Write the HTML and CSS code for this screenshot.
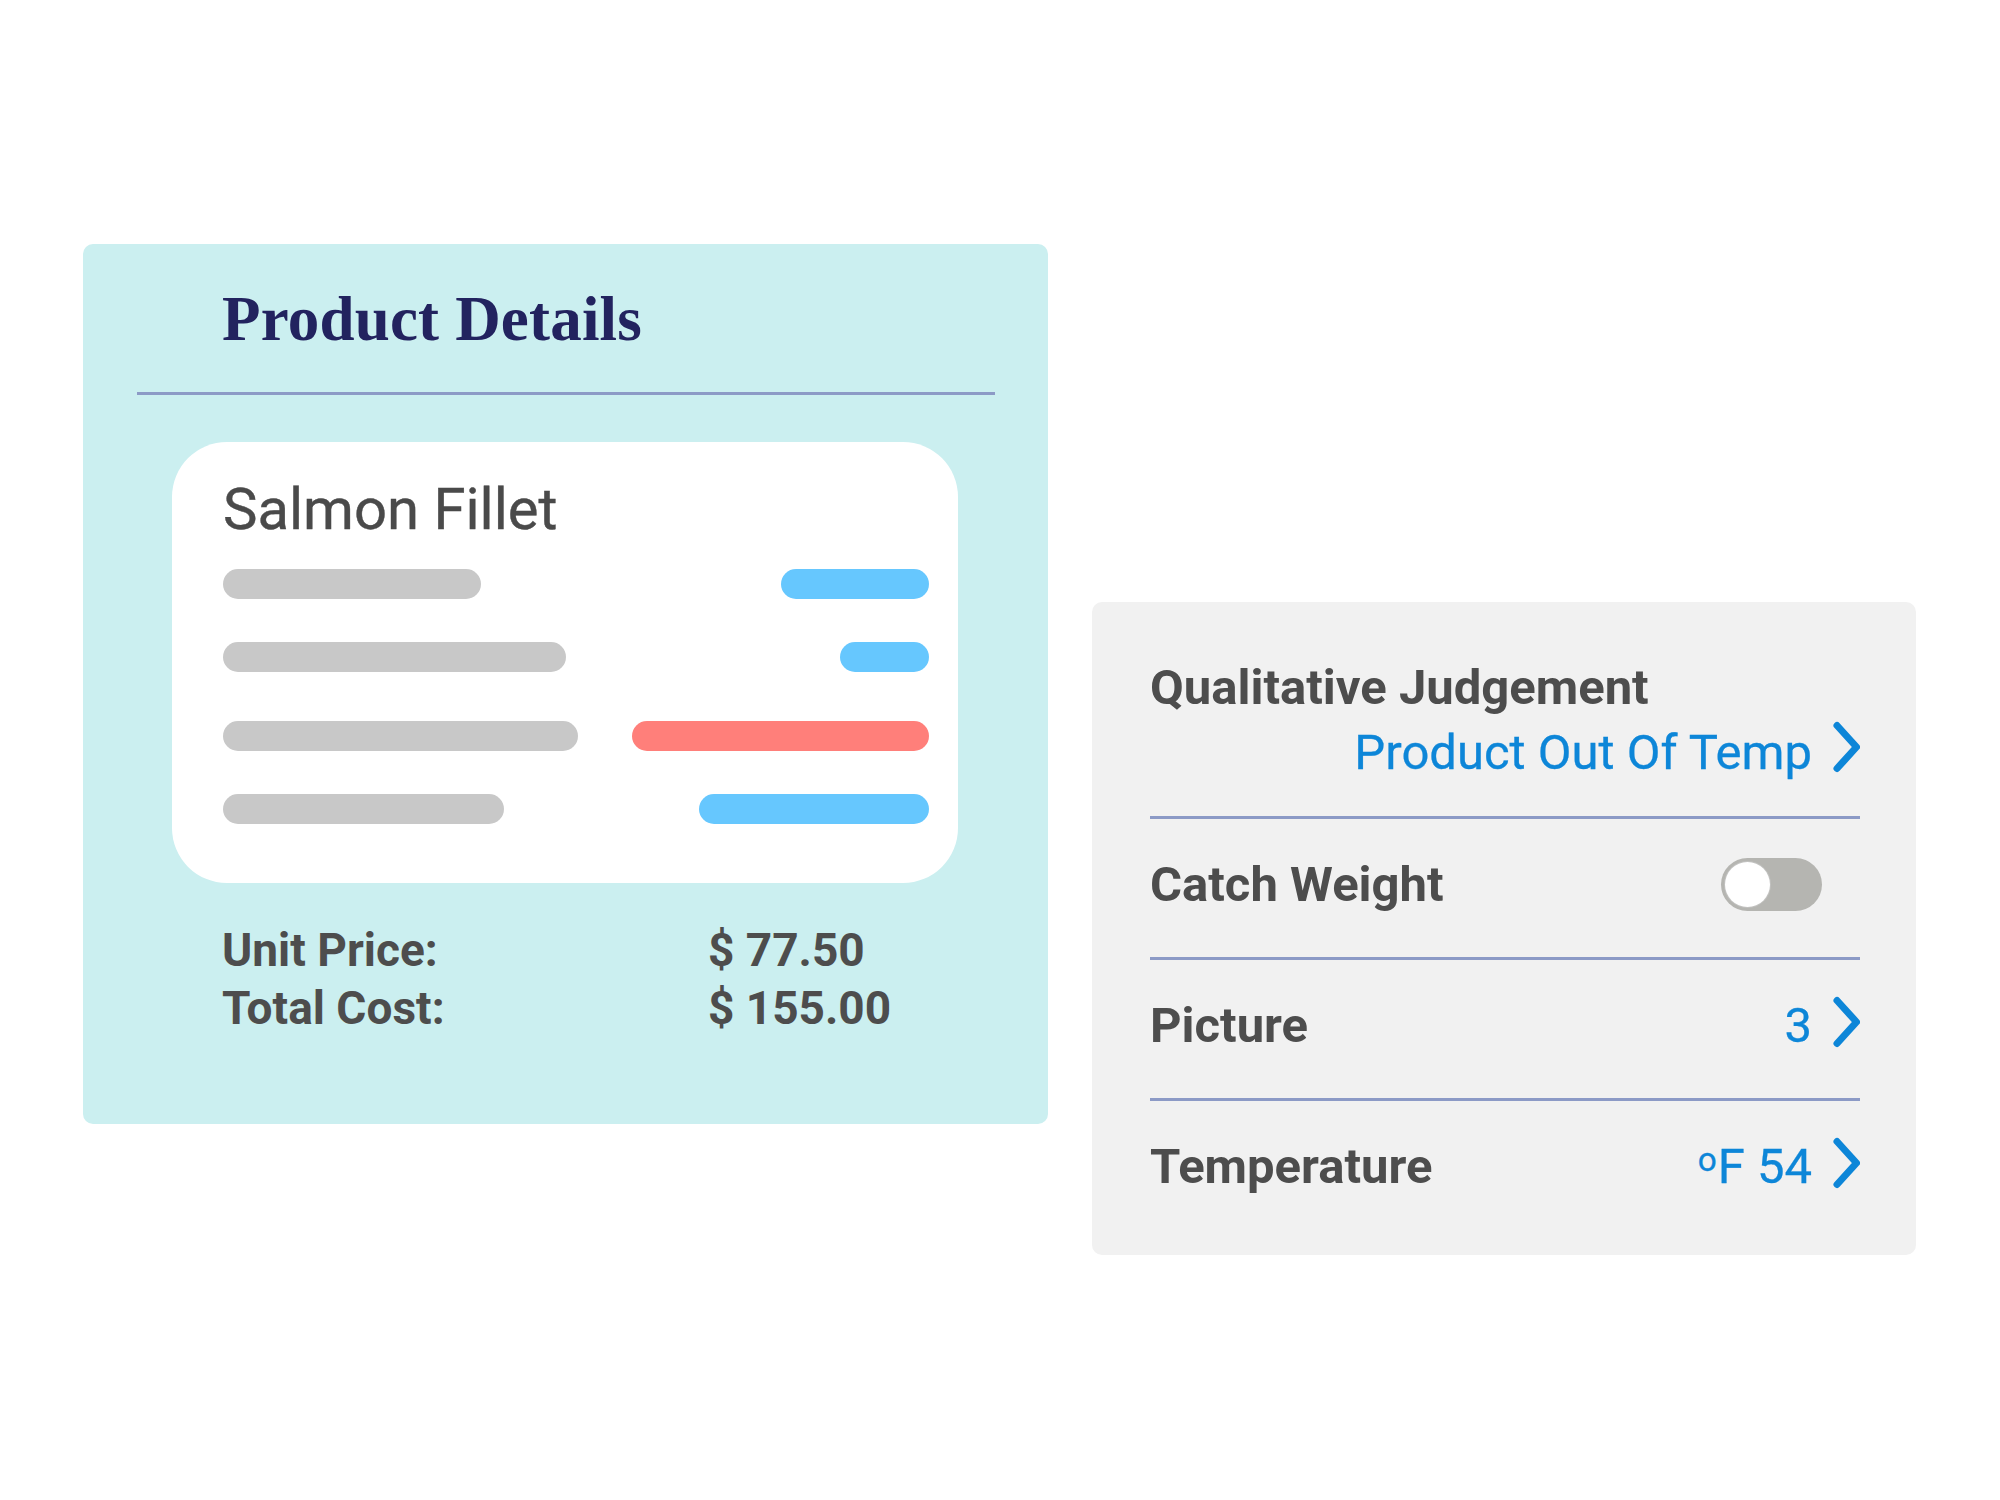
FILE: index.html
```html
<!DOCTYPE html>
<html lang="en">
<head>
<meta charset="utf-8">
<title>Product Details</title>
<link rel="stylesheet" href="styles.css">
</head>
<body>
<div class="stage">
  <section class="details">
    <h1 class="title">Product Details</h1>
    <div class="rule"></div>
    <div class="card">
      <div class="card-name">Salmon Fillet</div>
      <div class="bars">
        <div class="bar-row"><span class="bar gray" style="width:258px"></span><span class="bar blue" style="width:148px"></span></div>
        <div class="bar-row r2"><span class="bar gray" style="width:343px"></span><span class="bar blue" style="width:89px"></span></div>
        <div class="bar-row r3"><span class="bar gray" style="width:355px"></span><span class="bar red" style="width:297px"></span></div>
        <div class="bar-row r4"><span class="bar gray" style="width:281px"></span><span class="bar blue" style="width:230px"></span></div>
      </div>
    </div>
    <div class="costs">
      <span>Unit Price:</span><span>$ 77.50</span>
      <span>Total Cost:</span><span>$ 155.00</span>
    </div>
  </section>

  <section class="panel">
    <div class="q-label">Qualitative Judgement</div>
    <div class="q-value">
      <span>Product Out Of Temp</span>
      <svg class="chev chev-top" width="30" height="52" viewBox="0 0 30 52"><path d="M7 4.5 L26.5 26 L7 47.5" fill="none" stroke="#0d86d8" stroke-width="7" stroke-linecap="round" stroke-linejoin="round"/></svg>
    </div>
    <div class="divider first"></div>
    <div class="row">
      <span class="label">Catch Weight</span>
      <span class="toggle"><span class="knob"></span></span>
    </div>
    <div class="divider"></div>
    <div class="row">
      <span class="label">Picture</span>
      <span class="value"><span>3</span><svg class="chev" width="30" height="52" viewBox="0 0 30 52"><path d="M7 4.5 L26.5 26 L7 47.5" fill="none" stroke="#0d86d8" stroke-width="7" stroke-linecap="round" stroke-linejoin="round"/></svg></span>
    </div>
    <div class="divider"></div>
    <div class="row">
      <span class="label">Temperature</span>
      <span class="value"><span><span class="deg">o</span>F 54</span><svg class="chev" width="30" height="52" viewBox="0 0 30 52"><path d="M7 4.5 L26.5 26 L7 47.5" fill="none" stroke="#0d86d8" stroke-width="7" stroke-linecap="round" stroke-linejoin="round"/></svg></span>
    </div>
  </section>
</div>
</body>
</html>
```
FILE: styles.css
```css
* { box-sizing: border-box; }
html, body { margin: 0; padding: 0; background: #ffffff; }
body { width: 2000px; height: 1500px; font-family: Roboto, "Liberation Sans", sans-serif; color: #4d4d4d; }

.stage {
  display: flex;
  align-items: flex-start;
  gap: 44px;
  padding: 244px 0 0 83px;
}

.details {
  width: 965px;
  height: 880px;
  background: #cbeff0;
  border-radius: 10px;
  padding-top: 44px;
}

.title {
  margin: 0;
  padding-left: 139px;
  font-family: "Liberation Serif", "Times New Roman", serif;
  font-weight: 700;
  font-size: 63px;
  line-height: 1;
  letter-spacing: 0.2px;
  color: #22235f;
}

.rule {
  height: 3px;
  margin: 41px 53px 0 54px;
  background: #8c9ac6;
}

.card {
  height: 441px;
  margin: 47px 90px 0 89px;
  padding: 38px 29px 0 51px;
  background: #ffffff;
  border-radius: 55px;
}

.card-name {
  font-size: 58px;
  line-height: 1;
  font-weight: 400;
  color: #4a4a4a;
  -webkit-text-stroke: 0.4px #4a4a4a;
}

.bars { margin-top: 31px; display: flex; flex-direction: column; }
.bar-row { height: 30px; display: flex; justify-content: space-between; }
.bar-row.r2 { margin-top: 43px; }
.bar-row.r3 { margin-top: 49px; }
.bar-row.r4 { margin-top: 43px; }
.bar { display: block; height: 30px; border-radius: 15px; }
.bar.gray { background: #c8c8c8; }
.bar.blue { background: #66c7fe; }
.bar.red { background: #ff7f7a; }

.costs {
  margin-top: 38px;
  padding-left: 139px;
  display: grid;
  grid-template-columns: 486px auto;
  font-size: 46px;
  line-height: 58px;
  font-weight: 700;
  color: #4d4d4d;
}

.panel {
  width: 824px;
  height: 653px;
  margin-top: 358px;
  padding: 61px 56px 0 58px;
  background: #f1f1f1;
  border-radius: 10px;
}

.q-label, .label {
  font-size: 49px;
  line-height: 1;
  font-weight: 700;
  color: #4d4d4d;
}

.q-value {
  margin-top: 9px;
  display: flex;
  justify-content: flex-end;
  align-items: center;
  gap: 18px;
  font-size: 49px;
  line-height: 1;
  color: #0d86d8;
  -webkit-text-stroke: 0.3px #0d86d8;
}
.chev { display: block; flex: none; }
.chev-top { margin-bottom: 10px; }

.divider { height: 3px; background: #8c9ac6; }
.divider.first { margin-top: 33px; }

.row {
  height: 138px;
  padding-bottom: 8px;
  display: flex;
  align-items: center;
  justify-content: space-between;
}

.value {
  display: flex;
  align-items: center;
  gap: 18px;
  font-size: 49px;
  line-height: 1;
  color: #0d86d8;
  -webkit-text-stroke: 0.3px #0d86d8;
}
.value .chev { margin-bottom: 6px; }

.deg { font-size: 0.68em; vertical-align: 0.36em; margin-right: 1px; }

.toggle {
  width: 101px;
  height: 53px;
  margin-right: 38px;
  padding: 4px;
  display: flex;
  align-items: center;
  background: #b5b5b1;
  border-radius: 27px;
}
.knob {
  width: 45px;
  height: 45px;
  border-radius: 50%;
  background: #ffffff;
  box-shadow: 0 0 0 1px #c2c2c0;
}
```
